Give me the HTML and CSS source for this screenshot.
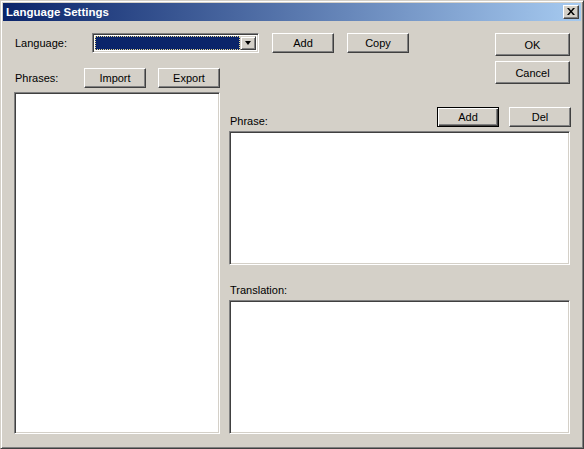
FILE: index.html
```html
<!DOCTYPE html>
<html lang="en">

<head>
    <meta charset="UTF-8">
    <title>Language Settings</title>
    <link rel="stylesheet" href="styles.css">
</head>

<body>
    <div class="window">
        <div class="titlebar">
            <span class="title">Language Settings</span>
            <span class="btn-close">
                <svg width="8" height="7" viewBox="0 0 8 7">
                    <path d="M0 0h2l2 2.5L6 0h2L5 3.5 8 7H6L4 4.5 2 7H0l3-3.5z" fill="#000"/>
                </svg>
            </span>
        </div>

        <div class="content">
            <!-- Linha superior -->
            <div class="top">
                <div class="top-left">
                    <div class="lang-row">
                        <span class="label lang-label">Language:</span>
                        <div class="combo">
                            <div class="combo-value"></div>
                            <div class="combo-arrow"><span></span></div>
                        </div>
                        <button class="btn btn-small">Add</button>
                        <button class="btn btn-small">Copy</button>
                    </div>
                    <div class="phrases-head">
                        <span class="label phrases-label">Phrases:</span>
                        <button class="btn btn-small">Import</button>
                        <button class="btn btn-small">Export</button>
                    </div>
                </div>
                <div class="top-right">
                    <button class="btn btn-big">OK</button>
                    <button class="btn btn-big">Cancel</button>
                </div>
            </div>

            <!-- Area principal -->
            <div class="main">
                <div class="listbox"></div>
                <div class="right-panel">
                    <div class="phrase-row">
                        <span class="label">Phrase:</span>
                        <div class="phrase-buttons">
                            <button class="btn btn-small btn-default">Add</button>
                            <button class="btn btn-small">Del</button>
                        </div>
                    </div>
                    <div class="textbox"></div>
                    <div class="translation-row">
                        <span class="label">Translation:</span>
                    </div>
                    <div class="textbox"></div>
                </div>
            </div>
        </div>
    </div>
</body>

</html>
```

FILE: styles.css
```css
/* Reset */
* {
    margin: 0;
    padding: 0;
    box-sizing: border-box;
    font-family: 'Liberation Sans', Arial, sans-serif;
}

body {
    background: #d4d0c8;
}

/* Janela */
.window {
    width: 584px;
    height: 449px;
    background: #d4d0c8;
    border: 1px solid;
    border-color: #d4d0c8 #404040 #404040 #d4d0c8;
    box-shadow: inset 1px 1px #fff, inset -1px -1px #808080;
    padding: 2px;
}

.titlebar {
    height: 18px;
    background: linear-gradient(to right, #0a246a, #a6caf0);
    display: flex;
    align-items: center;
    justify-content: space-between;
    padding: 0 2px 0 3px;
}

.title {
    color: #fff;
    font-weight: bold;
    font-size: 11.5px;
}

.btn-close {
    width: 16px;
    height: 14px;
    background: #d4d0c8;
    border: 1px solid;
    border-color: #fff #404040 #404040 #fff;
    box-shadow: inset -1px -1px #808080;
    display: flex;
    align-items: center;
    justify-content: center;
    padding: 0 1px 1px 0;
}

.btn-close svg {
    display: block;
}

.content {
    padding: 12px 11px 0 11px;
}

.label {
    font-size: 11px;
    color: #000;
}

/* Botoes */
.btn {
    background: #d4d0c8;
    border: 1px solid;
    border-color: #fff #404040 #404040 #fff;
    box-shadow: inset -1px -1px #808080;
    font-size: 11px;
    color: #000;
}

.btn-small {
    width: 62px;
    height: 20px;
}

.btn-big {
    width: 75px;
    height: 23px;
}

.btn-default {
    border: 1px solid #000;
    box-shadow: inset 1px 1px #fff, inset -1px -1px #404040, inset -2px -2px #808080;
}

/* Topo */
.top {
    display: flex;
    height: 55px;
}

.top-left {
    flex: 1;
}

.lang-row,
.phrases-head {
    display: flex;
    align-items: center;
    height: 20px;
}

.lang-label {
    width: 78px;
    padding-left: 1px;
}

.lang-row .btn {
    margin-left: 13px;
}

.combo {
    width: 167px;
    height: 20px;
    display: flex;
    background: #fff;
    border: 1px solid;
    border-color: #808080 #fff #fff #808080;
    box-shadow: inset 1px 1px #404040, inset -1px -1px #d4d0c8;
    padding: 2px;
}

.combo-value {
    flex: 1;
    background: #0a246a;
    border: 1px dotted #e8d890;
}

.combo-arrow {
    width: 16px;
    background: #d4d0c8;
    border: 1px solid;
    border-color: #d4d0c8 #404040 #404040 #d4d0c8;
    box-shadow: inset 1px 1px #fff, inset -1px -1px #808080;
    display: flex;
    align-items: center;
    justify-content: center;
}

.combo-arrow span {
    width: 0;
    height: 0;
    border-left: 3.5px solid transparent;
    border-right: 3.5px solid transparent;
    border-top: 4px solid #000;
}

.phrases-head {
    margin-top: 15px;
}

.phrases-label {
    width: 70px;
    padding-left: 1px;
}

.phrases-head .btn + .btn {
    margin-left: 12px;
}

.top-right {
    width: 75px;
    display: flex;
    flex-direction: column;
    gap: 5px;
}

/* Principal */
.main {
    display: flex;
    gap: 9px;
    margin-top: 4px;
    height: 342px;
}

.listbox,
.textbox {
    background: #fff;
    border: 1px solid;
    border-color: #808080 #fff #fff #808080;
    box-shadow: inset 1px 1px #404040, inset -1px -1px #d4d0c8;
}

.listbox {
    width: 206px;
}

.right-panel {
    flex: 1;
    display: flex;
    flex-direction: column;
}

.phrase-row {
    display: flex;
    justify-content: space-between;
    align-items: flex-end;
    margin-top: 15px;
    padding-left: 1px;
}

.phrase-buttons {
    display: flex;
    gap: 10px;
    margin-right: -1px;
}

.textbox {
    height: 134px;
    margin-top: 4px;
}

.translation-row {
    height: 31px;
    display: flex;
    align-items: flex-end;
    padding-left: 1px;
}
```
